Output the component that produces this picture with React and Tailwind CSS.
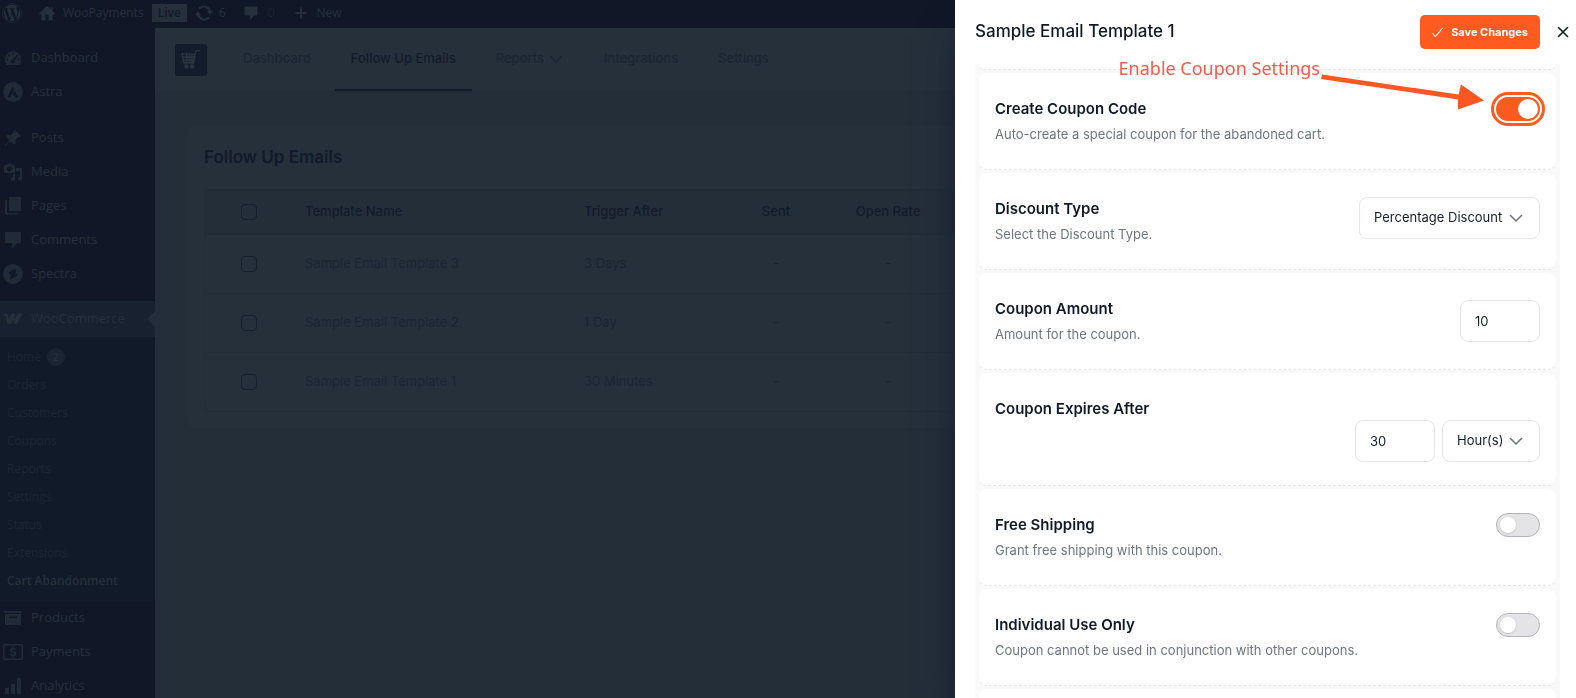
import React from "react";
import { Plus } from "lucide-react";
import { FaWordpress } from "react-icons/fa";

function Glyph({ children, box = "0 0 20 20", className = "size-5" }) {
  return (
    <svg viewBox={box} className={`${className} shrink-0`} fill="currentColor" aria-hidden="true">
      {children}
    </svg>
  );
}

function Line({ d, className = "size-4", width = 1.5 }) {
  return (
    <svg viewBox="0 0 16 16" className={`${className} shrink-0`} fill="none" stroke="currentColor" strokeWidth={width} strokeLinecap="round" strokeLinejoin="round" aria-hidden="true">
      <path d={d} />
    </svg>
  );
}

const chevronPath = "M2.500 5.500 8 11l5.500-5.500";
const bubble = <path d="M3 2h14a1 1 0 0 1 1 1v9a1 1 0 0 1-1 1h-3l-5 6v-6H3a1 1 0 0 1-1-1V3a1 1 0 0 1 1-1z" />;

const icons = {
  dashboard: (
    <Glyph>
      <path
        fillRule="evenodd"
        d="M3.8 17h12.5c1.1-1.500 1.700-3.300 1.700-5.300C18 7 14.400 3.500 10 3.500S2 7 2 11.700c0 2 .7 3.800 1.800 5.300zM10 4.800a1 1 0 1 1 0 2 1 1 0 0 1 0-2zM6 6.600a1 1 0 1 1 0 2 1 1 0 0 1 0-2zm8.200 0 .9.700-3.400 6a2 2 0 1 1-2.300-1.600zM4.500 10.500a1 1 0 1 1 0 2 1 1 0 0 1 0-2zm11 0a1 1 0 1 1 0 2 1 1 0 0 1 0-2z"
      />
    </Glyph>
  ),
  astra: (
    <Glyph>
      <path fillRule="evenodd" d="M10 0a10 10 0 1 0 0 20 10 10 0 0 0 0-20zM9.600 4.200l1.700 3.400-3.900 7.600H4.300zm2.200 4.500 3.400 6.500h-2.900l-.8-1.700H9.200z" />
    </Glyph>
  ),
  posts: (
    <Glyph>
      <path d="m10.400 3 1.200-1.200L18 8.200l-1.300 1.200-1.500-.3-3 3 .3 3.100-1.500 1.500-3.700-3.700L2 18l-.4-.4 4.900-5.400L2.900 8.500 4.400 7l3.200.3 3-3z" />
    </Glyph>
  ),
  media: (
    <Glyph>
      <path fillRule="evenodd" d="M2 3h2l1-1.500h3L9 3h2a1 1 0 0 1 1 1v6a1 1 0 0 1-1 1H2a1 1 0 0 1-1-1V4a1 1 0 0 1 1-1zm4.500 1.500a2.500 2.500 0 1 0 0 5 2.500 2.500 0 0 0 0-5z" />
      <path d="M13 6h6v10.500a2 2 0 1 1-2-2V9h-4zM12 12v5a2 2 0 1 1-2-2v-3z" />
    </Glyph>
  ),
  pages: (
    <Glyph>
      <path d="M6 1h12v14H6zM4 4v13h11v1.500H2V4z" />
    </Glyph>
  ),
  comments: <Glyph>{bubble}</Glyph>,
  spectra: (
    <Glyph>
      <path fillRule="evenodd" d="M10 0a10 10 0 1 0 0 20 10 10 0 0 0 0-20zm3 4.500-6.500 3.600c-1.300.8-.9 2.100.3 2.300l2 .4 1.700-1 2.500-1.500V4.500zM7 15.700l6.300-3.700c1.200-.8.900-2.100-.3-2.300l-1.900-.3-4.100 2.400z" />
    </Glyph>
  ),
  woo: (
    <Glyph>
      <path d="M2.500 4.500c1.700-.2 2.700.6 2.700 2.600v3L7.600 6c.7-1.200 1.400-1.500 2.300-1.500 1.200 0 1.700.8 1.700 2v3.700L14 6c.8-1.300 1.500-1.500 3-1.500h2.500l-4.200 8.300c-.8 1.500-1.500 2.200-2.700 2.200-1.400 0-2.100-.9-2.200-2.300l-.1-1.600-1.500 2.600C8.200 14.700 7.500 15 6.500 15c-1.500 0-2.200-1-2.500-2.300L2.700 6.800H.5c0-1.300.8-2.200 2-2.300z" />
    </Glyph>
  ),
  products: (
    <Glyph>
      <path d="M1 3h18v2H1z" />
      <path fillRule="evenodd" d="M2 6h16v11H2zm4 2.500V10h8V8.500z" />
    </Glyph>
  ),
  payments: (
    <Glyph>
      <path fillRule="evenodd" d="M1 2h18a1 1 0 0 1 1 1v14a1 1 0 0 1-1 1H1a1 1 0 0 1-1-1V3a1 1 0 0 1 1-1zm.5 1.500v13h17v-13z" />
      <path d="M9.300 4.800h1.400V6c1 .1 1.900.6 2.300 1.200l-1.100 1c-.5-.6-2.800-1-2.800.2 0 1.300 4.200.5 4.200 3.300 0 1.300-1.100 2.200-2.600 2.400v1.200H9.300V14c-1.200-.1-2.100-.7-2.500-1.500l1.200-.9c.6 1.100 3.500 1.200 3.500 0 0-1.400-4.200-.5-4.200-3.200 0-1.200.8-2.100 2-2.400z" />
    </Glyph>
  ),
  analytics: (
    <Glyph>
      <path d="M2 12h4v6H2zM8 8h4v10H8zM14 2h4v16h-4z" />
    </Glyph>
  ),
};

function SideLink({ icon, children }) {
  return (
    <a href="#" className="flex h-[34px] items-center gap-2 pl-[3px] text-[#26303c]">
      <span className="text-[#212b37]">{icons[icon]}</span>
      {children}
    </a>
  );
}

const subLinks = ["Orders", "Customers", "Coupons", "Reports", "Settings", "Status", "Extensions"];

function Sidebar() {
  return (
    <aside className="w-[155px] shrink-0 bg-[#101827] pt-[13px] font-['Open_Sans','Noto_Sans',sans-serif] text-[13px]">
      <nav>
        <SideLink icon="dashboard">Dashboard</SideLink>
        <SideLink icon="astra">Astra</SideLink>
        <div className="h-3" />
        <SideLink icon="posts">Posts</SideLink>
        <SideLink icon="media">Media</SideLink>
        <SideLink icon="pages">Pages</SideLink>
        <SideLink icon="comments">Comments</SideLink>
        <SideLink icon="spectra">Spectra</SideLink>
        <div className="h-[10px]" />
        <a href="#" className="relative flex h-9 items-center gap-2 bg-[#172130] pl-[3px] text-[#26303c]">
          {icons.woo}
          WooCommerce
          <span className="absolute right-0 top-[10px] border-y-8 border-r-8 border-y-transparent border-r-[#242e39]" />
        </a>
        <div className="bg-[#111a28] py-[6px] text-xs text-[#1c2633]">
          <a href="#" className="flex h-7 items-center gap-[6px] pl-[7px]">
            Home
            <span className="flex size-[18px] items-center justify-center rounded-full bg-[#1a2432] text-[11px] text-[#2a3440]">2</span>
          </a>
          {subLinks.map((label) => (
            <a key={label} href="#" className="flex h-7 items-center pl-[7px]">
              {label}
            </a>
          ))}
          <a href="#" className="flex h-7 items-center whitespace-nowrap pl-[7px] font-semibold text-[#26303c]">
            Cart Abandonment
          </a>
        </div>
        <SideLink icon="products">Products</SideLink>
        <SideLink icon="payments">Payments</SideLink>
        <SideLink icon="analytics">Analytics</SideLink>
      </nav>
    </aside>
  );
}

function AdminBar() {
  return (
    <header className="flex h-7 shrink-0 items-center bg-[#101827] pb-[2px] pl-[2px] font-['Open_Sans','Noto_Sans',sans-serif] text-xs text-[#26303c]">
      <FaWordpress className="size-5" />
      <a href="#" className="ml-[17px] flex items-center gap-2">
        <Glyph className="size-4">
          <path fillRule="evenodd" d="M10 1 0 11l1.500 1.200L3 10.800V19h14v-8.200l1.500 1.400L20 11l-3-3V3h-3v2zM8 12h4v7H8z" />
        </Glyph>
        WooPayments
      </a>
      <span className="ml-2 flex h-[18px] items-center bg-[#26303c] px-[6px] text-xs font-semibold text-[#101827]">Live</span>
      <a href="#" className="ml-2 flex items-center gap-[6px]">
        <Glyph className="size-[18px]">
          <path d="M10 2a8 8 0 0 1 7.600 5.500H20L16.500 12 13 7.500h2.200a6 6 0 0 0-9.800-1.800L4 4.300A8 8 0 0 1 10 2zM3.500 8 7 12.500H4.800a6 6 0 0 0 9.800 1.800l1.400 1.400A8 8 0 0 1 2.400 12.500H0z" />
        </Glyph>
        6
      </a>
      <a href="#" className="ml-[17px] flex items-center gap-[9px]">
        <Glyph className="size-4">{bubble}</Glyph>
        <span className="text-[#1a2432]">0</span>
      </a>
      <a href="#" className="ml-[18px] flex items-center gap-2">
        <Plus className="size-4" strokeWidth={3} />
        New
      </a>
    </header>
  );
}

function TopNav() {
  const link = "flex items-center border-b-2 border-transparent px-4";
  return (
    <div className="flex h-[63px] items-stretch bg-[#26303b] pl-5 text-[13px] font-medium text-[#1b2534]">
      <span className="mt-4 flex size-8 items-center justify-center rounded-[2px] bg-[#131c2b] text-[#2b3541]">
        <svg viewBox="0 0 20 20" className="size-5" fill="none" stroke="currentColor" strokeWidth="1.500" aria-hidden="true">
          <path d="M1 4h13l-1.500 9H3zM14 4l1.500-3.500H19M1.500 7h12M2.500 10H13M5.500 4v9M8.500 4v9M11 4v9" />
          <circle cx="5.500" cy="16.500" r="1.500" fill="currentColor" />
          <circle cx="11" cy="16.500" r="1.500" fill="currentColor" />
        </svg>
      </span>
      <nav className="ml-5 flex gap-2 whitespace-nowrap">
        <a href="#" className={link}>Dashboard</a>
        <a href="#" className="flex items-center border-b-2 border-[#131c2b] px-4 text-[#121b2b]">Follow Up Emails</a>
        <a href="#" className={link}>
          Reports
          <Line d={chevronPath} className="ml-1 size-4" />
        </a>
        <a href="#" className={link}>Integrations</a>
        <a href="#" className={link}>Settings</a>
      </nav>
    </div>
  );
}

const templates = [
  ["Sample Email Template 3", "3 Days"],
  ["Sample Email Template 2", "1 Day"],
  ["Sample Email Template 1", "30 Minutes"],
];

function Tick({ label }) {
  return (
    <input
      type="checkbox"
      aria-label={label}
      className="block size-4 appearance-none rounded-[4px] border border-[#161f2e]"
    />
  );
}

function EmailsCard() {
  return (
    <section className="ml-8 mr-8 mt-[34px] rounded-lg bg-[#26303b] px-[17px] pb-4 pt-[18px]">
      <h1 className="text-[17px] font-semibold leading-7 text-[#111a2a]">Follow Up Emails</h1>
      <div className="mt-[18px] overflow-hidden rounded-md border border-[#232d38]">
        <table className="w-full table-fixed border-collapse text-[13px] text-[#1b2533]">
          <colgroup>
            <col className="w-[84px]" />
            <col className="w-[279px]" />
            <col className="w-[152px]" />
            <col className="w-[112px]" />
            <col className="w-[112px]" />
            <col />
          </colgroup>
          <thead className="bg-[#242e39] text-[#121b2b]">
            <tr className="h-11">
              <th className="pl-9"><Tick label="Select all templates" /></th>
              <th className="px-4 text-left font-medium">Template Name</th>
              <th className="px-4 text-left font-medium">Trigger After</th>
              <th className="font-medium">Sent</th>
              <th className="font-medium">Open Rate</th>
              <th />
            </tr>
          </thead>
          <tbody>
            {templates.map(([name, delay]) => (
              <tr key={name} className="h-[59px] border-t border-[#232d38]">
                <td className="pl-9"><Tick label={name} /></td>
                <td className="px-4">{name}</td>
                <td className="px-4">{delay}</td>
                <td className="text-center">-</td>
                <td className="text-center">-</td>
                <td />
              </tr>
            ))}
          </tbody>
        </table>
      </div>
    </section>
  );
}

function Toggle({ id, on }) {
  return on ? (
    <input
      id={id}
      type="checkbox"
      role="switch"
      defaultChecked
      className="h-6 w-11 shrink-0 appearance-none rounded-full bg-[#ff5a1f] outline-3 outline-offset-2 outline-[#ff5a1f] before:ml-[22px] before:mt-[2px] before:block before:size-5 before:rounded-full before:bg-white"
    />
  ) : (
    <input
      id={id}
      type="checkbox"
      role="switch"
      className="h-6 w-11 shrink-0 appearance-none rounded-full border border-[#b4b5bb] bg-[#e4e4e7] before:ml-[3px] before:mt-[3px] before:block before:size-4 before:rounded-full before:bg-white before:shadow-[0_1px_2px_#00000026]"
    />
  );
}

function Dropdown({ id, label, value, className }) {
  return (
    <span className={`relative block ${className}`}>
      <select
        id={id}
        aria-label={label}
        className="h-[42px] w-full appearance-none rounded-lg border border-[#e6e7ea] bg-white pl-[14px] pr-7 text-[13px] text-[#141d2c]"
      >
        <option>{value}</option>
      </select>
      <span className="pointer-events-none absolute right-4 top-[13px] text-[#6b7280]">
        <Line d={chevronPath} />
      </span>
    </span>
  );
}

function NumberBox({ id, label, value }) {
  return (
    <input
      id={id}
      aria-label={label}
      type="text"
      inputMode="numeric"
      defaultValue={value}
      className="h-[42px] w-20 rounded-lg border border-[#e6e7ea] bg-white px-[14px] text-[13px] text-[#141d2c]"
    />
  );
}

function Setting({ id, title, text, children, className = "pb-[25px]" }) {
  return (
    <div className={`flex items-start justify-between rounded-lg border-b border-dashed border-[#e5e7eb] bg-white px-4 pt-6 ${className}`}>
      <div>
        <label htmlFor={id} className="block text-[15px] font-semibold leading-6 text-[#111928]">{title}</label>
        {text && <p className="mt-[3px] text-[13px] leading-5 text-[#6f7682]">{text}</p>}
      </div>
      {children}
    </div>
  );
}

function Drawer() {
  return (
    <aside className="fixed inset-y-0 right-0 flex w-[621px] flex-col overflow-hidden bg-white shadow-[0_25px_40px_-10px_#101827]">
      <header className="flex h-16 shrink-0 items-center pl-5 pr-[5px]">
        <h2 className="text-[17px] font-medium text-[#111928]">Sample Email Template 1</h2>
        <button className="ml-auto flex h-[34px] items-center gap-2 rounded-[5px] bg-[#ff5a1f] px-3 text-[11px] font-bold text-white">
          <Line d="M1 9.500 5 14 15 2" className="size-[11px]" />
          Save Changes
        </button>
        <button aria-label="Close" className="ml-[15px] text-[#111928]">
          <Line d="m3.500 3.500 9 9m0-9-9 9" width={1.6} />
        </button>
      </header>
      <div className="ml-5 mr-4 flex grow flex-col gap-[3px] overflow-hidden bg-[#f9f9fa] px-1">
        <div className="h-[6px] shrink-0 rounded-b-lg border-b border-dashed border-[#e5e7eb] bg-white" />
        <Setting id="create" title="Create Coupon Code" text="Auto-create a special coupon for the abandoned cart.">
          <Toggle id="create" on />
        </Setting>
        <Setting id="type" title="Discount Type" text="Select the Discount Type.">
          <Dropdown id="type" value="Percentage Discount" className="w-[181px]" />
        </Setting>
        <Setting id="amount" title="Coupon Amount" text="Amount for the coupon.">
          <div className="mt-[3px]">
            <NumberBox id="amount" value="10" />
          </div>
        </Setting>
        <Setting id="expires" title="Coupon Expires After" className="pb-[23px]">
          <div className="mt-[23px] flex gap-[7px]">
            <NumberBox id="expires" value="30" />
            <Dropdown label="Expiry unit" value="Hour(s)" className="w-[98px]" />
          </div>
        </Setting>
        <Setting id="shipping" title="Free Shipping" text="Grant free shipping with this coupon.">
          <Toggle id="shipping" />
        </Setting>
        <Setting id="individual" title="Individual Use Only" text="Coupon cannot be used in conjunction with other coupons.">
          <Toggle id="individual" />
        </Setting>
        <div className="h-24 shrink-0 rounded-lg bg-white" />
      </div>
      <div className="pointer-events-none absolute right-[92px] top-[54px] flex items-start">
        <span className="whitespace-nowrap font-['Noto_Sans',sans-serif] text-lg leading-7 text-[#fb5a4a]">Enable Coupon Settings</span>
        <svg viewBox="0 0 164 60" className="h-[60px] w-[164px]" fill="#ff5722" aria-hidden="true">
          <path d="M2 20.500 138.500 40.500 141 30.500 164 46.500 138 55.500 138 45.500 1 25z" />
        </svg>
      </div>
    </aside>
  );
}

export default function App() {
  return (
    <div className="flex h-screen flex-col overflow-hidden bg-[#242e39] font-[Inter,'Noto_Sans',sans-serif]">
      <AdminBar />
      <div className="flex min-h-0 grow">
        <Sidebar />
        <main className="min-w-0 grow">
          <TopNav />
          <EmailsCard />
        </main>
      </div>
      <Drawer />
    </div>
  );
}
